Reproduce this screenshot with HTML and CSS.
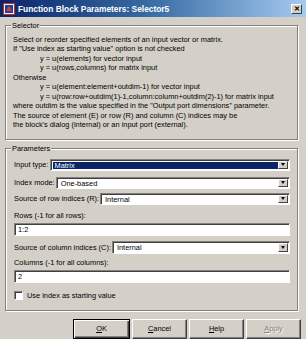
FILE: index.html
```html
<!DOCTYPE html>
<html>
<head>
<meta charset="utf-8">
<link rel="stylesheet" href="styles.css">
</head>
<body>
<div class="window">
  <div class="titlebar">
    <svg class="appicon" width="12" height="12" viewBox="0 0 12 12">
      <rect x="0" y="0" width="12" height="12" fill="#c03020"/>
      <rect x="1" y="1" width="10" height="10" fill="#f0f0f0"/>
      <rect x="2" y="2" width="8" height="8" fill="#2040a0"/>
      <path d="M3 8 L6 3 L9 8 Z" fill="#e04020"/>
    </svg>
    <span class="title">Function Block Parameters: Selector5</span>
    <span class="closebtn">✕</span>
  </div>
  <div class="content">
    <fieldset class="group group-selector">
      <legend class="legend">Selector</legend>
      <div class="desc">
        <div>Select or reorder specified elements of an input vector or matrix.</div>
        <div>If "Use index as starting value" option is not checked</div>
        <div class="ind">y = u(elements) for vector input</div>
        <div class="ind">y = u(rows,columns) for matrix input</div>
        <div>Otherwise</div>
        <div class="ind">y = u(element:element+outdim-1) for vector input</div>
        <div class="ind">y = u(row:row+outdim(1)-1,column:column+outdim(2)-1) for matrix input</div>
        <div>where outdim is the value specified in the "Output port dimensions" parameter.</div>
        <div>The source of element (E) or row (R) and column (C) indices may be</div>
        <div>the block's dialog (internal) or an input port (external).</div>
      </div>
    </fieldset>
    <fieldset class="group group-params">
      <legend class="legend">Parameters</legend>
      <div class="params">
        <div class="row r1">
          <span class="lbl">Input type:</span>
          <div class="combo"><span class="val sel">Matrix</span><span class="dd"><i class="tri"></i></span></div>
        </div>
        <div class="row r2">
          <span class="lbl">Index mode:</span>
          <div class="combo"><span class="val">One-based</span><span class="dd"><i class="tri"></i></span></div>
        </div>
        <div class="row r3">
          <span class="lbl">Source of row indices (R):</span>
          <div class="combo"><span class="val">Internal</span><span class="dd"><i class="tri"></i></span></div>
        </div>
        <div class="flabel l1">Rows (-1 for all rows):</div>
        <div class="edit e1">1:2</div>
        <div class="row r4">
          <span class="lbl">Source of column indices (C):</span>
          <div class="combo"><span class="val">Internal</span><span class="dd"><i class="tri"></i></span></div>
        </div>
        <div class="flabel l2">Columns (-1 for all columns):</div>
        <div class="edit e2">2</div>
        <div class="check"><span class="box"></span><span>Use index as starting value</span></div>
      </div>
    </fieldset>
  </div>
  <div class="buttons">
    <div class="btn default"><span class="inner"><u>O</u>K</span></div>
    <div class="btn"><span class="inner"><u>C</u>ancel</span></div>
    <div class="btn"><span class="inner"><u>H</u>elp</span></div>
    <div class="btn disabled"><span class="inner"><u>A</u>pply</span></div>
  </div>
</div>
</body>
</html>
```

FILE: styles.css
```css
html, body {
  margin: 0;
  padding: 0;
  background: #d4d0c8;
}
.window {
  width: 306px;
  height: 339px;
  background: #d4d0c8;
  font-family: "Liberation Sans", Arial, sans-serif;
  font-size: 7.4px;
  color: #000;
  overflow: hidden;
  display: flex;
  flex-direction: column;
}
.titlebar {
  height: 17px;
  background: linear-gradient(to right, #0a246a 0%, #3a6ea5 50%, #a6caf0 100%);
  display: flex;
  align-items: center;
  padding: 0 4px 0 3px;
  box-sizing: border-box;
}
.appicon { flex: none; }
.title {
  color: #fff;
  font-weight: bold;
  font-size: 8.4px;
  margin-left: 3px;
  flex: 1;
  white-space: nowrap;
}
.closebtn {
  width: 11px;
  height: 10px;
  background: #d4d0c8;
  border: 1px solid;
  border-color: #fff #404040 #404040 #fff;
  box-sizing: border-box;
  font-size: 7px;
  font-weight: bold;
  line-height: 8px;
  text-align: center;
  color: #000;
}
.content {
  padding: 0 8px 0 5px;
  display: flex;
  flex-direction: column;
}
.group {
  margin: 0;
  padding: 0 7px 0 5px;
  border: 1px solid #808080;
  box-shadow: inset 1px 1px 0 #fff, 1px 1px 0 #fff;
  min-width: 0;
}
.legend {
  padding: 0 1px;
  line-height: 9px;
  background: #d4d0c8;
  position: relative;
}
.group-selector { margin-top: 4px; }
.group-params { margin-top: 4px; height: 167px; box-sizing: border-box; }
.desc {
  padding: 5px 0 9px 2px;
  line-height: 9.45px;
  white-space: nowrap;
}
.ind { padding-left: 27px; }
.params {
  display: flex;
  flex-direction: column;
  padding: 6px 0 0 3px;
}
.row {
  display: flex;
  align-items: center;
  height: 12px;
}
.lbl { white-space: nowrap; margin-right: 1px; }
.r2 { margin-top: 6px; }
.r3 { margin-top: 4px; }
.r4 { margin-top: 5px; height: 13px; }
.combo {
  flex: 1;
  height: 100%;
  box-sizing: border-box;
  border: 1px solid;
  border-color: #808080 #fff #fff #808080;
  box-shadow: inset 1px 1px 0 #404040;
  background: #fff;
  display: flex;
  padding: 2px 1px 1px 2px;
}
.val {
  flex: 1;
  line-height: 8px;
  padding-left: 2px;
}
.val.sel { background: #0a246a; color: #fff; }
.dd {
  width: 10px;
  background: #d4d0c8;
  border: 1px solid;
  border-color: #fff #404040 #404040 #fff;
  box-sizing: border-box;
  display: flex;
  align-items: center;
  justify-content: center;
  margin-top: -1px;
}
.tri {
  width: 0;
  height: 0;
  border-left: 2.5px solid transparent;
  border-right: 2.5px solid transparent;
  border-top: 3px solid #000;
}
.flabel { line-height: 9px; margin-top: 6px; }
.l2 { margin-top: 4px; }
.edit {
  height: 13px;
  box-sizing: border-box;
  border: 1px solid;
  border-color: #808080 #fff #fff #808080;
  box-shadow: inset 1px 1px 0 #404040;
  background: #fff;
  line-height: 11px;
  padding-left: 3px;
  margin-top: 3px;
}
.check {
  display: flex;
  align-items: center;
  margin-top: 8px;
  height: 10px;
}
.box {
  width: 9px;
  height: 9px;
  box-sizing: border-box;
  background: #fff;
  border: 1px solid;
  border-color: #808080 #fff #fff #808080;
  box-shadow: inset 1px 1px 0 #404040;
  margin-right: 4px;
}
.buttons {
  display: flex;
  justify-content: flex-end;
  gap: 2px;
  padding: 8px 5px 0 0;
}
.btn {
  width: 55px;
  height: 20px;
  box-sizing: border-box;
  border: 1px solid;
  border-color: #fff #404040 #404040 #fff;
  box-shadow: inset -1px -1px 0 #808080;
  display: flex;
  align-items: center;
  justify-content: center;
}
.btn.default {
  width: 57px;
  border: 1px solid #000;
  box-shadow: inset 1px 1px 0 #fff, inset -1px -1px 0 #404040, inset -2px -2px 0 #808080;
}
.btn.disabled .inner { color: #808080; text-shadow: 1px 1px 0 #fff; }
.inner { font-size: 7.4px; }
```
